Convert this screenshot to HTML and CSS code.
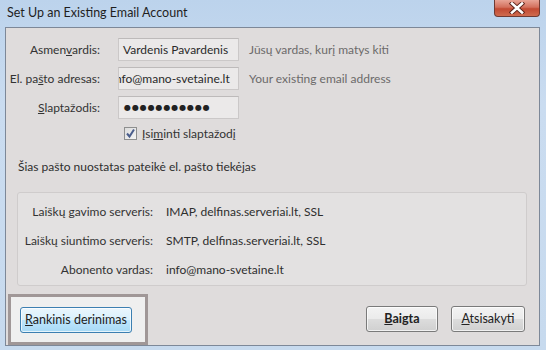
FILE: index.html
```html
<!DOCTYPE html>
<html lang="lt">
<head>
  <meta charset="UTF-8" />
  <title>Set Up an Existing Email Account</title>
  <link rel="stylesheet" href="styles.css">
</head>
<body>
  <div class="window">
    <div class="titlebar">
      <span class="title">Set Up an Existing Email Account</span>
      <span class="close-btn">
        <svg width="20" height="12" viewBox="0 0 20 12">
          <path d="M5 1.5 L15 10.5 M15 1.5 L5 10.5" stroke="#5a2219" stroke-width="4.4" stroke-linecap="square"/>
          <path d="M5 1.5 L15 10.5 M15 1.5 L5 10.5" stroke="#ffffff" stroke-width="2.6" stroke-linecap="square"/>
        </svg>
      </span>
    </div>

    <div class="client">
      <div class="fields">
        <span class="field-label">Asmen<u>v</u>ardis:</span>
        <div class="textbox">Vardenis Pavardenis</div>
        <span class="hint">Jūsų vardas, kurį matys kiti</span>

        <span class="field-label">El. pa<u>š</u>to adresas:</span>
        <div class="textbox scrolled"><span>info@mano-svetaine.lt</span></div>
        <span class="hint">Your existing email address</span>

        <span class="field-label"><u>S</u>laptažodis:</span>
        <div class="textbox password">●●●●●●●●●●●</div>
        <span></span>
      </div>

      <div class="remember">
        <span class="checkbox">
          <svg width="11" height="11" viewBox="0 0 11 11">
            <path d="M2 5.5 L4.5 8.5 L9 1.5" fill="none" stroke="#4a5d8c" stroke-width="2"/>
          </svg>
        </span>
        <span>Įsi<u>m</u>inti slaptažodį</span>
      </div>

      <p class="provider">Šias pašto nuostatas pateikė el. pašto tiekėjas</p>

      <div class="server-box">
        <span class="server-label">Laiškų gavimo serveris:</span>
        <span class="server-value">IMAP, delfinas.serveriai.lt, SSL</span>
        <span class="server-label">Laiškų siuntimo serveris:</span>
        <span class="server-value">SMTP, delfinas.serveriai.lt, SSL</span>
        <span class="server-label">Abonento vardas:</span>
        <span class="server-value">info@mano-svetaine.lt</span>
      </div>

      <div class="actions">
        <div class="focus-box">
          <button class="btn btn-hover"><u>R</u>ankinis derinimas</button>
        </div>
        <div class="right-buttons">
          <button class="btn btn-done"><u>B</u>aigta</button>
          <button class="btn btn-cancel"><u>A</u>tsisakyti</button>
        </div>
      </div>
    </div>
  </div>
</body>
</html>
```

FILE: styles.css
```css
body {
  margin: 0;
  font-family: Lato, "Open Sans", Arial, sans-serif;
  font-size: 12px;
  color: #2e2e2e;
  background-color: #c6d9ee;
}

.window {
  width: 546px;
  height: 350px;
  box-sizing: border-box;
  padding: 0 6px 4px 5px;
  display: flex;
  flex-direction: column;
  background: linear-gradient(to bottom, #bcd3ec 0%, #cadcf0 30%, #c7daee 100%);
}

.titlebar {
  height: 27px;
  flex: none;
  display: flex;
  align-items: flex-start;
  justify-content: space-between;
}

.title {
  margin: 5px 0 0 2px;
  font-size: 12.5px;
  color: #1e1e1e;
}

.close-btn {
  width: 46px;
  height: 17px;
  box-sizing: border-box;
  border: 1px solid #6f3a33;
  border-top: none;
  border-radius: 0 0 4px 4px;
  background: linear-gradient(to bottom, #e8a496 0%, #d3705d 45%, #c24a33 55%, #cf6b4f 100%);
  display: flex;
  justify-content: center;
  align-items: center;
}

.client {
  flex: 1;
  border: 1px solid #7d8898;
  background-color: #dfdcdc;
  display: flex;
  flex-direction: column;
}

.fields {
  display: grid;
  grid-template-columns: 112px 121px 1fr;
  row-gap: 6px;
  padding-top: 10px;
  align-items: center;
}

.field-label {
  text-align: right;
  padding-right: 18px;
  white-space: nowrap;
  color: #333;
}

.textbox {
  height: 23px;
  box-sizing: border-box;
  border: 1px solid #cbc8c8;
  border-top-color: #bdbaba;
  background-color: #ebe9e9;
  padding: 0 4px;
  display: flex;
  align-items: center;
  white-space: nowrap;
  overflow: hidden;
  color: #2a2a2a;
}

/* caret is at the end, so the start of the address scrolls out of view */
.textbox.scrolled span {
  margin-left: -11px;
}

.textbox.password {
  font-family: "DejaVu Sans", sans-serif;
  font-size: 8px;
  letter-spacing: 0.9px;
  padding-left: 5px;
  color: #222;
}

.hint {
  padding-left: 10px;
  color: #6c6a6a;
  white-space: nowrap;
}

.remember {
  display: flex;
  align-items: center;
  gap: 5px;
  margin: 7px 0 0 118px;
  color: #333;
}

.checkbox {
  width: 13px;
  height: 13px;
  box-sizing: border-box;
  border: 1px solid #8e8f8f;
  background: linear-gradient(135deg, #dcdcdc, #f4f4f4);
  display: flex;
  justify-content: center;
  align-items: center;
}

.provider {
  margin: 18px 0 0 12px;
  color: #2e2e2e;
}

.server-box {
  margin: 18px 12px 0 11px;
  height: 94px;
  box-sizing: border-box;
  border: 1px solid #cfcccc;
  border-radius: 3px;
  background-color: #e3e1e1;
  display: grid;
  grid-template-columns: 135px 1fr;
  column-gap: 13px;
  grid-auto-rows: 29px;
  align-items: center;
  padding-top: 4px;
}

.server-label {
  text-align: right;
  white-space: nowrap;
  color: #333;
}

.server-value {
  white-space: nowrap;
  color: #2e2e2e;
}

.actions {
  margin-top: auto;
  display: flex;
  justify-content: space-between;
  align-items: center;
  padding: 0 14px 0 2px;
}

.focus-box {
  width: 140px;
  height: 51px;
  box-sizing: border-box;
  border: 3px solid #a09797;
  background-color: #efefef;
  display: flex;
  align-items: center;
  padding-left: 9px;
}

.right-buttons {
  display: flex;
  gap: 13px;
  margin-top: -2px;
}

.btn {
  height: 26px;
  box-sizing: border-box;
  font-family: inherit;
  font-size: 12.5px;
  color: #222;
  border: 1px solid #7a7a7a;
  border-radius: 3px;
  background: linear-gradient(to bottom, #f3f3f3 0%, #ebebeb 48%, #dcdcdc 52%, #d0d0d0 100%);
  box-shadow: inset 0 0 0 1px rgba(255, 255, 255, 0.7);
  padding: 0;
  cursor: pointer;
}

.btn-hover {
  width: 112px;
  border-color: #3c7fb1;
  background: linear-gradient(to bottom, #eaf6fd 0%, #d9f0fc 48%, #bee6fd 52%, #a7d9f5 100%);
}

.btn-done {
  width: 72px;
  font-weight: bold;
}

.btn-cancel {
  width: 74px;
}
```
